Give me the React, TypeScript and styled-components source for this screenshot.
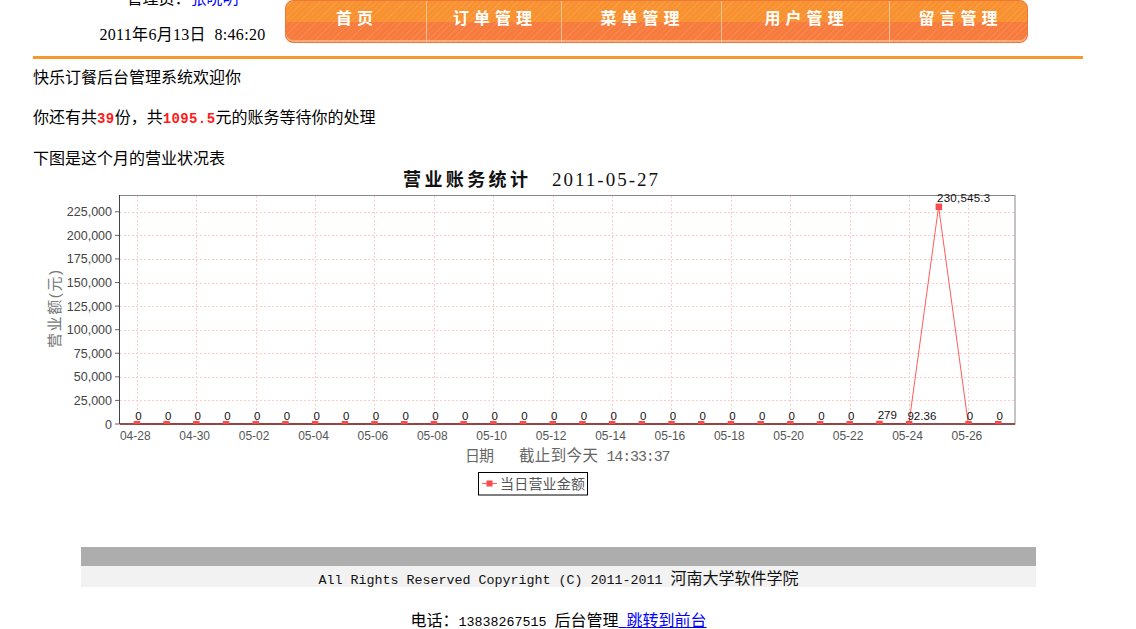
import React from 'react';
import styled, { createGlobalStyle } from 'styled-components';

const GlobalStyle = createGlobalStyle`
  html, body {
    margin: 0;
    padding: 0;
    background: #fff;
    overflow: hidden;
  }
  body {
    font-family: "Noto Sans CJK SC", "Liberation Sans", sans-serif;
    font-size: 16px;
    color: #000;
  }
`;

const Page = styled.div`
  margin-top: -13px;
  padding-left: 33px;
  width: 1050px;
`;

const Header = styled.div`
  display: flex;
  align-items: flex-end;
`;

const UserBox = styled.div`
  width: 205px;
  padding-left: 47px;
  display: flex;
  flex-direction: column;
  gap: 18px;
  text-align: center;
  line-height: 20px;
  white-space: nowrap;
`;

const Link = styled.a`
  color: #0000ff;
  text-decoration: none;
`;

const DateLine = styled.div`
  font-family: "Liberation Serif", "Noto Sans CJK SC", serif;
  white-space: pre;
  letter-spacing: 0.3px;
`;

const Nav = styled.ul`
  display: flex;
  margin: 0 0 2px;
  padding: 0;
  list-style: none;
  width: 743px;
  height: 43px;
  box-sizing: border-box;
  border: 1px solid #ee7838;
  border-radius: 8px;
  overflow: hidden;
  background:
    repeating-linear-gradient(
      -45deg,
      rgba(255, 255, 255, 0.09) 0 1px,
      rgba(255, 255, 255, 0) 1px 4px
    ),
    linear-gradient(#f8912f 0 51%, #f67b3d 51% 100%);
  box-shadow: inset 0 -2px 0 rgba(255, 205, 170, 0.55);
`;

const NavItem = styled.li<{ $w: number }>`
  width: ${({ $w }) => $w}px;
  flex: none;
  box-sizing: border-box;
  display: flex;
  align-items: flex-start;
  justify-content: center;
  padding: 4px 0 0 2px;
  color: #fff;
  font-weight: bold;
  font-size: 16px;
  letter-spacing: 5px;
  line-height: 24px;
  & + & {
    border-left: 1px solid rgba(255, 215, 185, 0.75);
  }
`;

const Rule = styled.div`
  margin-top: 11px;
  height: 3px;
  background: #f7982d;
`;

const Para = styled.p<{ $gap: number }>`
  margin: ${({ $gap }) => $gap}px 0 0;
  height: 20px;
  line-height: 20px;
`;

const Num = styled.b`
  color: #ff1a1a;
  font-family: "Liberation Mono", monospace;
  font-size: 14px;
  letter-spacing: 0.4px;
  line-height: 1;
`;

const ChartSvg = styled.svg`
  display: block;
  font-family: "Liberation Sans", "Noto Sans CJK SC", sans-serif;
`;

const Footer = styled.div`
  margin: 47px 0 0 48px;
  width: 955px;
`;

const GrayBar = styled.div`
  height: 19px;
  background: #adadad;
`;

const CopyBar = styled.div`
  height: 21px;
  line-height: 23px;
  background: #f2f2f2;
  text-align: center;
  color: #111;
  white-space: pre;
`;

const Mono = styled.span`
  font-family: "Liberation Mono", monospace;
  font-size: 13.33px;
  line-height: 1;
`;

const Contact = styled.div`
  margin-top: 22px;
  height: 20px;
  line-height: 20px;
  text-align: center;
  white-space: pre;
`;

const UnderLink = styled.a`
  color: #0000ff;
  text-decoration: underline;
`;

const navItems: [string, number][] = [
  ['首页', 140],
  ['订单管理', 135],
  ['菜单管理', 160],
  ['用户管理', 168],
  ['留言管理', 140],
];

// chart data: 04-28 .. 05-27
const labels = Array.from({ length: 30 }, (_, i) =>
  i < 3 ? `04-${28 + i}` : `05-${String(i - 2).padStart(2, '0')}`
);
const values = labels.map((_, i) =>
  i === 25 ? 279 : i === 26 ? 92.36 : i === 27 ? 230545.3 : 0
);
const valueText = (v: number) =>
  v === 0 ? '0' : v === 230545.3 ? '230,545.3' : String(v);

const px = (i: number) => 136.7 + i * 29.7;
const py = (v: number) => 424 - (v * 23.58) / 25000;

const PLOT = { x: 119.5, y: 195.5, r: 1015, b: 424 };

const SalesChart: React.FC = () => {
  const pts = values.map((v, i) => `${px(i)},${py(v)}`).join(' ');
  return (
    <ChartSvg width={1000} height={333} viewBox="33 167 1000 333">
      <defs>
        <clipPath id="plot">
          <rect x={PLOT.x} y={PLOT.y} width={PLOT.r - PLOT.x} height={PLOT.b - PLOT.y} />
        </clipPath>
      </defs>

      <text x={403} y={186} fontSize={18} fontWeight="bold" textLength={125} fill="#111">
        营业账务统计
      </text>
      <text
        x={552}
        y={186}
        fontSize={19}
        fontFamily="Liberation Serif, serif"
        textLength={106}
        fill="#111"
      >
        2011-05-27
      </text>

      {Array.from({ length: 9 }, (_, k) => (
        <line
          key={`h${k}`}
          x1={120}
          x2={PLOT.r}
          y1={Math.round(py((k + 1) * 25000)) + 0.5}
          y2={Math.round(py((k + 1) * 25000)) + 0.5}
          stroke="#ffcccc"
          strokeDasharray="2 2"
        />
      ))}
      {labels.map((_, i) =>
        i % 2 === 0 ? (
          <line
            key={`v${i}`}
            x1={Math.round(px(i)) + 0.5}
            x2={Math.round(px(i)) + 0.5}
            y1={196}
            y2={424}
            stroke="#ffcccc"
            strokeDasharray="2 2"
          />
        ) : null
      )}

      <rect
        x={PLOT.x}
        y={PLOT.y}
        width={PLOT.r - PLOT.x}
        height={PLOT.b - PLOT.y}
        fill="none"
        stroke="#888"
      />
      <line x1={119.5} x2={119.5} y1={195} y2={424} stroke="#444" />

      {Array.from({ length: 10 }, (_, k) => {
        const y = py(k * 25000);
        return (
          <g key={`yt${k}`}>
            <line x1={115} x2={119} y1={y} y2={y} stroke="#666" />
            <text x={112} y={y + 4.5} fontSize={12.5} textAnchor="end" fill="#444">
              {(k * 25000).toLocaleString('en-US')}
            </text>
          </g>
        );
      })}

      {labels.map((l, i) =>
        i % 2 === 0 ? (
          <text key={`xl${i}`} x={px(i) - 1.4} y={440} fontSize={12} textAnchor="middle" fill="#555">
            {l}
          </text>
        ) : null
      )}

      <polyline points={pts} fill="none" stroke="#ff5c5c" strokeWidth={1} />
      <line x1={120} x2={PLOT.r} y1={424} y2={424} stroke="#7c2a2a" strokeWidth={1.5} />

      <g clipPath="url(#plot)">
        {values.map((v, i) => (
          <rect key={`m${i}`} x={px(i) - 3} y={py(v) - 3} width={6.5} height={6.5} fill="#f84b4b" />
        ))}
      </g>

      {values.map((v, i) => (
        <text
          key={`vl${i}`}
          x={px(i) - 1.5}
          y={py(v) - 4.3}
          fontSize={11.5}
          fill="#111"
          textLength={v === 230545.3 ? 53 : v === 92.36 ? 29 : undefined}
        >
          {valueText(v)}
        </text>
      ))}

      <text x={465} y={461} fontSize={15} fill="#666" textLength={29}>
        日期
      </text>
      <text x={519} y={461} fontSize={15.5} fill="#666" textLength={79}>
        截止到今天
      </text>
      <text
        x={606.5}
        y={461}
        fontSize={15}
        fontFamily="Liberation Mono, monospace"
        fill="#666"
        textLength={64}
      >
        14:33:37
      </text>

      <text
        transform="translate(60,309) rotate(-90)"
        textAnchor="middle"
        fontSize={15}
        fill="#777"
        textLength={78}
      >
        营业额(元)
      </text>

      <rect x={478.5} y={472.5} width={109} height={22.5} fill="#fff" stroke="#000" />
      <line x1={482} x2={497} y1={483.5} y2={483.5} stroke="#ff5c5c" />
      <rect x={486.5} y={480.5} width={6} height={6} fill="#f84b4b" />
      <text x={500} y={489} fontSize={14} fill="#555" textLength={85}>
        当日营业金额
      </text>
    </ChartSvg>
  );
};

const App: React.FC = () => (
  <>
    <GlobalStyle />
    <Page>
      <Header>
        <UserBox>
          <div>
            管理员：<Link href="#">张晓明</Link>
          </div>
          <DateLine>2011年6月13日  8:46:20</DateLine>
        </UserBox>
        <Nav>
          {navItems.map(([t, w]) => (
            <NavItem key={t} $w={w}>
              {t}
            </NavItem>
          ))}
        </Nav>
      </Header>
      <Rule />
      <Para $gap={7}>快乐订餐后台管理系统欢迎你</Para>
      <Para $gap={20}>
        你还有共<Num>39</Num>份，共<Num>1095.5</Num>元的账务等待你的处理
      </Para>
      <Para $gap={21}>下图是这个月的营业状况表</Para>
      <SalesChart />
      <Footer>
        <GrayBar />
        <CopyBar>
          <Mono>All Rights Reserved Copyright (C) 2011-2011 </Mono>河南大学软件学院
        </CopyBar>
        <Contact>
          电话：<Mono>13838267515 </Mono>后台管理
          <UnderLink href="#">
            <Mono> </Mono>跳转到前台
          </UnderLink>
        </Contact>
      </Footer>
    </Page>
  </>
);

export default App;
